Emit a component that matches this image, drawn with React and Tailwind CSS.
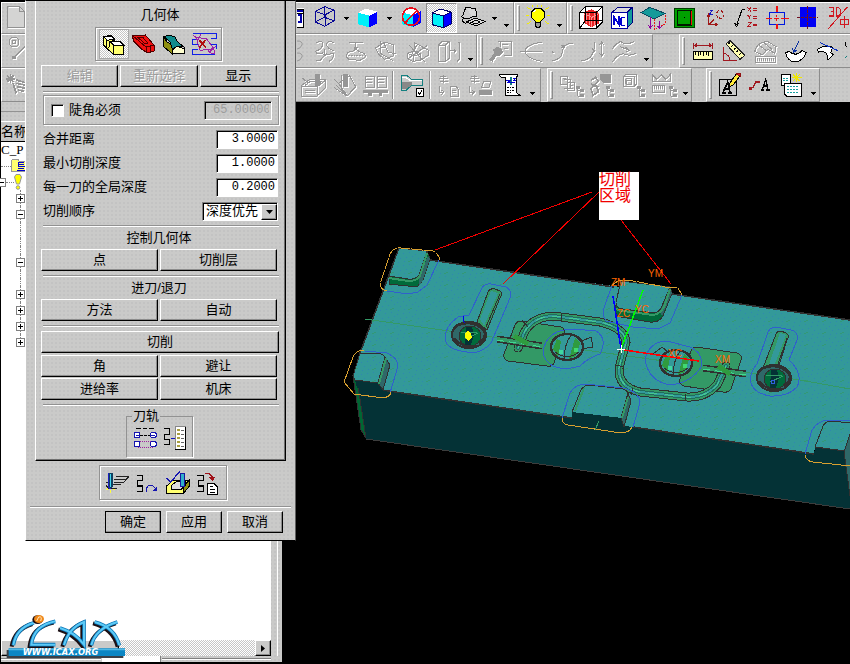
import React from "react";

const FACE = "bg-[#cacac9] bg-[radial-gradient(#c3c3c3_1px,transparent_1px)] bg-[size:4px_4px]";
const CHECKER = "bg-[repeating-conic-gradient(#ffffff_0_25%,#c6c6c6_0_50%)] bg-[size:2px_2px]";
const RAISED = "border border-t-white border-l-white border-r-black border-b-black shadow-[inset_-1px_-1px_0_#8c8c8c]";
const ETCHED = "border border-[#929292] shadow-[1px_1px_0_#fff,inset_1px_1px_0_#fff]";
const SUNKEN = "border border-t-[#808080] border-l-[#808080] border-r-white border-b-white shadow-[inset_1px_1px_0_#000]";

/* ---------- toolbar parts ---------- */

function Tool({ x, y, label, ghost, active, children }) {
  return (
    <button
      type="button"
      aria-label={label}
      disabled={ghost}
      className={`flex w-[31px] shrink-0 items-center justify-center ${active ? `h-[30px] border border-t-[#8c8c8c] border-l-[#8c8c8c] border-r-white border-b-white ${CHECKER}` : ""}`}
    >
      <svg width="30" height="30" viewBox={`${x} ${y} 90 90`} fill="none" strokeWidth="3" className="block shrink-0 overflow-visible" shapeRendering="crispEdges">
        {ghost ? (
          <>
            <g className="text-white" stroke="currentColor" transform="translate(3 3)">{children}</g>
            <g className="text-[#969696]" stroke="currentColor">{children}</g>
          </>
        ) : (
          children
        )}
      </svg>
    </button>
  );
}

function Arrow({ low }) {
  return (
    <span className={`flex w-3 shrink-0 justify-center ${low ? "items-end pb-[6px]" : "items-center"}`}>
      <svg width="5" height="3" viewBox="0 0 5 3" shapeRendering="crispEdges"><path d="M0 0H5L2.5 3Z" fill="#000" /></svg>
    </span>
  );
}

function Group({ className = "", grip, children }) {
  return (
    <div role="toolbar" className={`flex shrink-0 items-stretch border border-t-white border-l-white border-r-[#8c8c8c] border-b-[#8c8c8c] ${className}`}>
      {grip && <span className="my-[2px] mr-[2px] ml-[2px] w-[3px] shrink-0 border border-t-white border-l-white border-r-[#8c8c8c] border-b-[#8c8c8c]" />}
      {children}
    </div>
  );
}

const Divider = () => <span className="mx-[2px] my-[2px] w-[2px] shrink-0 border-l border-r border-l-[#8c8c8c] border-r-white" />;

function SolidCube() {
  return (
    <>
      <path d="M186 35L208 23L243 32L219 44Z" fill="#fff" />
      <path d="M186 35L219 44V79L186 70Z" fill="#00f0f8" />
      <path d="M219 44L243 32V67L219 79Z" fill="#00f" />
    </>
  );
}

function ToolbarOne() {
  return (
    <div className="flex h-8 overflow-hidden">
      <Group className="w-[296px] border-r-0 pr-[2px]">
        <Tool label="新建" x={-6} y={9}>
          <path d="M8 19H43L57 33V82H8Z" fill="#d4d4d3" stroke="#929292" />
          <path d="M43 19V33H57M11 22H41M60 35V85H10" stroke="#fff" />
          <path d="M43 19V33H57" stroke="#929292" />
        </Tool>
      </Group>
      <Group className="w-[217px] border-l-0">
        <span className="flex w-3 items-center">
          <svg width="7" height="20" viewBox="0 0 7 20" shapeRendering="crispEdges"><path d="M0 0H7V20H0Z" fill="#fff" /><path d="M0 1H6V19H0M0 5H6" fill="none" stroke="#000" /><path d="M0 3H6M1 7H4V14H1" stroke="#00a" strokeWidth="2" fill="none" /></svg>
        </span>
        <Tool label="线框" x={42} y={9}>
          <path d="M58 34L86 20L114 30V62L86 79L58 66ZM58 34L88 44L114 30M88 44V79M86 20V52L58 66M86 52L114 62" stroke="#0a0a96" />
        </Tool>
        <Arrow />
        <Tool label="着色" x={170} y={6}><SolidCube /></Tool>
        <Arrow />
        <Tool label="隐藏" x={299} y={9}>
          <g transform="translate(130 2)"><SolidCube /></g>
          <circle cx="344" cy="50" r="26" stroke="#e8101c" strokeWidth="5" />
          <path d="M362 31L326 69" stroke="#e8101c" strokeWidth="5" />
        </Tool>
        <Tool label="带边着色" active x={395} y={7}>
          <g transform="translate(225 2)"><SolidCube /></g>
          <path d="M411 37L433 25L468 34V69L444 81L411 72ZM411 37L444 46L468 34M444 46V81" stroke="#000066" />
        </Tool>
        <Tool label="曲面" x={487} y={9}>
          <path d="M510 22L540 26L544 48Q536 52 530 50L506 40Z" fill="#d8d8d8" stroke="#000" />
          <path d="M510 22Q504 44 498 50L506 56Q520 58 530 50" fill="#ccc" stroke="#000" />
          <path d="M512 66L538 54L568 64L542 78ZM500 56V64L510 70M526 67L540 60L554 66L540 72Z" fill="#ddd" stroke="#000" />
        </Tool>
        <Arrow />
        <Arrow low />
      </Group>
      <Group grip className="w-[53px]">
        <Tool label="灯光" x={681} y={9}>
          <path d="M694 22L704 29M690 47H700M694 72L704 65M708 16L712 22M738 16L734 22M758 22L748 29M762 47H752M758 72L748 65M724 14V20" stroke="#f4f000" />
          <path d="M720 66L706 52V36L716 26H736L746 36V52L732 66Z" fill="#ffff00" stroke="#000" />
          <path d="M719 68H733V79L729 83H723L719 79Z" fill="#999" stroke="#000" />
          <path d="M713 36L719 30" stroke="#fff" strokeWidth="4" />
        </Tool>
        <Arrow low />
      </Group>
      <Group grip className="grow">
        <Tool label="毛坯" x={14} y={7}>
          <path d="M26 34L42 18H94V64L76 82H26Z" fill="#fff" stroke="#000" />
          <path d="M38 34L62 26L84 38V68L60 80L38 66Z" fill="#e82020" />
          <path d="M38 40L62 50L84 38M62 50V78M46 36V68M54 36V74M70 36V76" stroke="#ff8c8c" />
          <path d="M26 34H76L94 18M76 34V82M42 18V60H94M26 82L42 60" stroke="#000" />
        </Tool>
        <Tool label="数控" x={108} y={7}>
          <path d="M122 36L142 19H184V66L168 82V36Z" fill="#149a9a" stroke="#000080" />
          <path d="M122 36L142 19H184L168 36Z" fill="#ddd" stroke="#000080" />
          <path d="M122 36H168V82H122Z" fill="#fff" stroke="#0000a0" />
          <path d="M128 74V48L143 70V46M162 50H152L149 55V68L153 74H162" stroke="#0000d0" strokeWidth="5" />
        </Tool>
        <Tool label="投影" x={201} y={7}>
          <path d="M210 36L236 20L282 38L250 55Z" fill="#149a9a" stroke="#0a4a60" />
          <path d="M250 56V88L282 70V40" stroke="#e81818" strokeDasharray="6 3" />
          <path d="M238 50V80M232 74L238 82L244 74M266 62V82M260 76L266 84L272 76" stroke="#9000a0" />
        </Tool>
        <Tool label="区域" x={294} y={7}>
          <path d="M311 22H369V81H311Z" fill="#00a000" stroke="#003c00" />
          <path d="M319 30H360V73H319Z" stroke="#001800" strokeWidth="4" />
          <path d="M360 30V73" stroke="#f01010" />
          <path d="M338 50H342" stroke="#000" strokeWidth="4" />
        </Tool>
        <Tool label="旋转坐标" x={388} y={7}>
          <path d="M414 44V72H438M414 72L430 56M410 48L414 40L418 48M434 68L440 72L434 76" stroke="#a01818" />
          <path d="M417 28H426L417 40H427" stroke="#1818c0" />
          <path d="M436 34L442 34M440 32L446 28M452 30L458 36M458 42V48M454 52L448 54M442 50L438 44M446 48V54H452" stroke="#a01818" />
        </Tool>
        <Tool label="坐标" x={481} y={7}>
          <path d="M524 27H514L498 74M492 66L497 78L504 68" stroke="#000" />
          <path d="M531 20L541 32M541 20L531 32M531 43L536 49L541 43M536 49V55M531 66H541L531 78H541M546 24H558M546 29H558M546 47H558M546 52H558M546 70H558M546 75H558" stroke="#b01820" />
        </Tool>
        <Tool label="对中" x={571} y={7}>
          <path d="M592 35H638V71H592Z" stroke="#0018e0" />
          <path d="M615 15V33M615 70V86" stroke="#f01010" strokeWidth="5" />
          <path d="M615 42V48M615 56V62M583 52H602M608 52H622M628 52H653" stroke="#f01010" />
        </Tool>
        <Tool label="中面" x={665} y={7}>
          <path d="M685 20H735V79H685Z" fill="#0000f4" />
          <path d="M710 16V84M678 50H740" stroke="#701020" strokeDasharray="9 3" />
        </Tool>
        <Tool label="三维" x={757} y={7}>
          <path d="M772 20H785V32H777H785V46H772M794 20V46H800L806 40V26L800 20Z" stroke="#d01820" strokeWidth="4" />
          <path d="M828 18L770 84M806 55H830V70H806ZM818 46V82" stroke="#d01820" />
        </Tool>
      </Group>
    </div>
  );
}

function ToolbarTwo() {
  return (
    <div className="flex h-[34px] overflow-hidden">
      <Group className="w-[296px] border-r-0 pr-[2px]">
        <Tool label="草图" ghost x={-6} y={120}>
          <circle cx="27" cy="138" r="15" /><circle cx="27" cy="138" r="6" />
          <path d="M27 184L72 140" /><path d="M22 180H30V188H22ZM64 138H72V146H64Z" fill="currentColor" />
        </Tool>
      </Group>
      <Group className="w-[180px] border-l-0">
        <span className="flex w-3 items-center">
          <svg width="7" height="22" viewBox="0 0 7 22" fill="none" stroke="#999"><path d="M0 1Q6 1 5 5Q3 9 0 9M0 13Q6 13 5 17Q3 21 0 21" /></svg>
        </span>
        <Tool label="曲线" ghost x={41} y={108}><path d="M60 128Q78 118 80 132Q76 148 58 154Q60 166 80 158M112 128Q94 118 90 134Q96 148 112 152M60 182Q72 186 78 172Q90 160 112 162Q114 174 98 184M84 148V166M79 160L84 167L90 160" /></Tool>
        <Tool label="投影曲线" ghost x={134} y={108}><path d="M158 126H200M178 126V146M172 140L178 148L184 140M150 170Q152 152 168 154L178 148L192 156Q210 160 206 172Q196 176 190 182L170 178Q160 184 150 170Z" /><path d="M156 166H200" strokeDasharray="5 3" /></Tool>
        <Tool label="相交曲线" ghost x={227} y={108}><path d="M238 144L264 126L292 134L290 168L264 178L246 162ZM252 122V160L290 182M262 128L276 158L300 160M248 146L270 140" /></Tool>
        <Tool label="截面曲线" ghost x={321} y={108}><path d="M334 160L356 152L374 162V180L350 184L334 176ZM356 152V128L396 150V166L374 180M338 134L386 186M362 136L344 170M394 136L336 176M334 160L352 168L374 162M352 168V184" /></Tool>
        <Tool label="偏置" ghost x={413} y={108}><path d="M426 136L438 124H458V176L448 184H426ZM426 136H446L458 124M446 136V184M462 152H478M472 146L478 152L472 158M484 128H490V176L482 184" /></Tool>
        <Arrow low />
      </Group>
      <Group grip className="w-[176px]">
        <Tool label="编辑曲线" ghost x={573} y={108}><path d="M608 124H648V166H626M616 124V140M622 134H640M626 144H640" /><path d="M584 178L600 160L596 150L606 142L618 146L622 156L614 166L604 166L592 184Z" fill="currentColor" /></Tool>
        <Tool label="修剪" ghost x={666} y={108}><path d="M676 154H742M742 126Q690 134 690 154Q696 178 742 184" /></Tool>
        <Tool label="分割" ghost x={759} y={108}><path d="M770 182Q800 180 802 154Q804 130 834 130M800 136L808 144M808 136L800 144M770 152L776 160" /></Tool>
        <Tool label="圆角" ghost x={28} y={108}><path d="M34 182Q74 182 76 126M96 130V164M88 136L96 126L104 136M88 158L96 168L104 158M68 146L76 154M60 170L70 178" /></Tool>
        <Tool label="光顺" ghost x={121} y={108}><path d="M128 146Q150 118 158 128Q168 138 194 124M128 186Q148 158 164 162Q180 170 198 160M152 140L176 150M168 142L178 152L168 156" /></Tool>
        <Arrow low />
      </Group>
      <div className="w-[26px] shrink-0" />
      <Group grip className="grow border-t-white">
        <Tool label="测距" x={352} y={108}>
          <path d="M368 128V146M426 128V146M372 136H422M380 130L372 136L380 142M414 130L422 136L414 142" stroke="#a01820" />
          <path d="M367 155H426V177H367Z" fill="#ffffb0" stroke="#000" />
          <path d="M374 156V164M382 156V168M390 156V164M398 156V168M406 156V164M414 156V168" stroke="#000" />
        </Tool>
        <Tool label="测角" x={445} y={108}>
          <path d="M458 140V182H498M458 160Q476 162 478 182" stroke="#a01820" />
          <path d="M466 132L478 122L522 166L508 178Z" fill="#ffffb0" stroke="#222" />
          <path d="M478 128L474 132M486 136L482 140M494 144L490 148M502 152L498 156M510 160L506 164" stroke="#000" />
        </Tool>
        <Tool label="测面" ghost x={538} y={108}><path d="M552 154Q560 126 590 124L616 140L612 160L592 148L574 164ZM566 136L590 154M580 128L604 148M554 170H614V186H554Z" /><path d="M558 178H612" strokeDasharray="3 3" strokeWidth="9" /></Tool>
        <Tool label="曲率" x={631} y={108}>
          <path d="M645 158L656 154Q674 172 694 152L706 158Q698 184 672 186Q650 184 645 158Z" fill="#fff" stroke="#000" />
          <path d="M686 122L668 156M666 144L668 158L678 150" stroke="#0a30a0" />
        </Tool>
        <Tool label="切线" x={724} y={108}>
          <path d="M740 148Q764 132 786 142L780 158L788 164L772 180L768 160Q758 152 744 156Z" fill="#fff" stroke="#000" />
          <path d="M748 128L802 152" stroke="#0a30c0" />
        </Tool>
        <span className="flex w-2 shrink-0 items-center">
          <svg width="5" height="20" viewBox="0 0 5 20" fill="none" shapeRendering="crispEdges"><path d="M3 1V4L5 6" stroke="#000" /><path d="M3 17L5 15" stroke="#148080" /></svg>
        </span>
      </Group>
    </div>
  );
}

const SmallTree = ({ dx }) => (
  <g transform={`translate(${dx} 0)`}><path d="M0 262V288M0 272H8M0 288H8" /><path d="M-4 260H4V266H-4ZM8 268H16V274H8ZM8 284H16V290H8Z" fill="currentColor" /></g>
);

function ToolbarThree() {
  return (
    <div className="flex h-[34px] overflow-hidden">
      <Group className="w-[296px] border-r-0 pr-[2px]">
        <Tool label="加工" ghost x={-6} y={210}>
          <path d="M16 222V250M2 236H30M6 226L26 246M26 226L6 246M24 250L34 280M34 240L72 252M34 250L72 258M36 260L68 266M38 270L56 274" strokeWidth="5" />
        </Tool>
      </Group>
      <Group className="w-[244px] border-l-0">
        <Tool label="型腔铣" ghost x={9} y={210}><path d="M20 256L44 238H90V264L66 288H20ZM20 260H66L90 242M30 256L46 244H80L62 260M66 260V288M22 234L40 250M30 270H60M30 278H60" /><path d="M62 222H72V256H62Z" fill="currentColor" /></Tool>
        <Tool label="曲面铣" ghost x={102} y={210}><path d="M116 236L130 250L164 228L182 260L156 288L116 262M130 250L156 286M140 226V262M124 256L150 280" /><path d="M146 222H156V258H146Z" fill="currentColor" /></Tool>
        <Tool label="刀路" ghost x={195} y={210}><path d="M210 228H238V262H210ZM246 228H274V262H246ZM214 238H232M214 246H232M250 238H268M250 246H268" /><path d="M206 270H276V276H206ZM220 276H228V286H220ZM252 276H260V286H252Z" fill="currentColor" /></Tool>
        <Divider />
        <Tool label="刀具" x={306} y={210}>
          <path d="M318 225H334L350 238H382V256H350L334 270H318Z" fill="#ccc" stroke="#148080" />
          <path d="M322 246H350V254L336 266H322Z" fill="#888" />
          <path d="M322 232H332L346 242H380" stroke="#fff" />
          <path d="M364 266H386V289H364Z" fill="#fff" stroke="#000" /><path d="M369 277L374 282L381 272" stroke="#000" />
        </Tool>
        <Divider />
        <Tool label="生成" ghost x={417} y={210}><path d="M446 224V248M432 236H458M436 230H452M436 244H458M432 258V276H444M438 270L448 276L438 284M466 258H482L490 268V288H466ZM470 270H484M470 278H484" /></Tool>
        <Tool label="后处理" ghost x={510} y={210}><path d="M538 224V248M524 236H552M528 230H546M528 244H552M524 258V276H536M530 270L540 276L530 284M560 262L566 244H588L582 262Z" /><path d="M552 270H588V284H552Z" fill="currentColor" /></Tool>
        <Tool label="文档" x={603} y={210}>
          <path d="M614 224H668V230H664V278L676 286H630V232H620L614 228Z" fill="#fff" stroke="#000" />
          <path d="M636 262H656M636 270H658M636 278H650" stroke="#000" strokeDasharray="5 3" />
          <path d="M648 230V254" stroke="#148080" strokeWidth="6" />
          <path d="M634 240H646L638 248H660M654 234H662L656 242H662" stroke="#0000d0" />
        </Tool>
        <Arrow low />
      </Group>
      <div className="w-[6px] shrink-0" />
      <Group grip className="w-[145px]">
        <Tool label="程序树" ghost x={-43} y={210}><path d="M-28 228H-8V252H-28ZM-18 238H2V264H-18M-8 248H12V272H-8ZM-22 236H-12M-2 256H8M-2 264H8" /><SmallTree dx={22} /></Tool>
        <Tool label="刀具树" ghost x={50} y={210}><path d="M62 240L76 232L84 244L62 266L68 286L84 276L78 254M62 252L84 262" strokeWidth="5" /><path d="M92 222H120V248H100L92 240Z" fill="currentColor" /><SmallTree dx={112} /></Tool>
        <Tool label="几何树" ghost x={142} y={210}><path d="M158 230L166 222H198V252L190 260H158ZM158 230H190V260M166 240H182V252H166Z" /><circle cx="174" cy="244" r="10" /><SmallTree dx={206} /></Tool>
        <Tool label="方法树" ghost x={235} y={210}><path d="M244 224V244H298V224L286 238L272 224L258 238ZM246 256H282V276H246Z" /><path d="M250 262H282" strokeDasharray="3 3" strokeWidth="8" /><SmallTree dx={300} /></Tool>
        <Arrow low />
      </Group>
      <div className="w-[14px] shrink-0" />
      <Group grip className="w-[114px]">
        <Tool label="注释" x={436} y={210}>
          <path d="M449 238H499V286H449Z" stroke="#000" />
          <path d="M456 278H468M474 278H486M461 276L474 246L481 276M464 266H478" stroke="#000" strokeWidth="5" />
          <path d="M480 250L500 222L512 226L490 256L480 260Z" fill="#ffe838" stroke="#000" />
          <path d="M500 222L512 220V228Z" fill="#e02020" stroke="#901010" />
        </Tool>
        <Tool label="标注" x={529} y={210}>
          <path d="M538 268L550 262L558 246H572" stroke="#a01820" strokeWidth="4" /><path d="M537 262H547V270H537Z" fill="#a01820" />
          <path d="M573 270H583M589 270H600M578 268L588 238L595 268M580 258H594" stroke="#000" strokeWidth="4" />
        </Tool>
        <Tool label="表格" x={622} y={210}>
          <path d="M634 224H662V256H634Z" fill="#fff" stroke="#000" /><path d="M644 250H694V288H650L644 282Z" fill="#fff" stroke="#000" />
          <path d="M640 234H656M640 242H656M652 260H686M652 268H686M652 276H686" stroke="#18a0a0" strokeDasharray="6 3" />
          <path d="M680 220V246M666 233H696M670 223L690 243M690 223L670 243" stroke="#f0e800" />
        </Tool>
        <Arrow low />
      </Group>
    </div>
  );
}

/* ---------- navigator ---------- */

function Expander({ open }) {
  return (
    <button type="button" aria-label={open ? "折叠" : "展开"} className="relative flex size-[9px] shrink-0 items-center justify-center border border-[#808080] bg-white">
      <span className="h-px w-[5px] bg-black" />
      {!open && <span className="absolute h-[5px] w-px bg-black" />}
    </button>
  );
}

const TREE_ROWS = ["closed", "open", "", "", "open", "", "closed", "closed", "closed", "closed"];

function Navigator() {
  return (
    <aside className={`relative flex w-[282px] shrink-0 flex-col border-l border-black ${FACE}`}>
      <div className="flex min-h-0 grow">
        <div className="flex w-[270px] flex-col">
          <div className="mt-[9px] h-[11px] border-t border-b border-t-[#929292] border-b-white" />
          <div className="h-5 overflow-hidden border-b border-black text-[13px] leading-5">名称</div>
          <div className="flex min-h-0 grow flex-col bg-white">
            <div className="h-4 w-6 overflow-hidden font-['Liberation_Serif',serif] text-[13px] leading-4">C_P</div>
            <div className="flex h-4 items-center">
              <span className="w-[10px] border-t border-dotted border-[#808080]" />
              <svg width="16" height="14" viewBox="0 0 16 14" shapeRendering="crispEdges"><path d="M0 2L2 0H7L8 2H16V12H0Z" fill="#ffff70" stroke="#999" /><path d="M13 3H7V7H14V11H6M7 5H13M7 9H13" stroke="#0000d0" fill="none" /></svg>
            </div>
            <div className="flex h-4 items-center">
              <span className="-ml-1"><Expander open /></span>
              <span className="w-2 border-t border-dotted border-[#808080]" />
              <svg width="8" height="16" viewBox="0 0 8 16"><path d="M2 0.5H6L7.500 3L5.500 10H2.500L0.500 3Z" fill="#ffff00" stroke="#999" /><circle cx="4" cy="13.500" r="1.800" fill="#ffff00" stroke="#999" /></svg>
            </div>
            <div className="flex flex-col">
              {TREE_ROWS.map((state, i) => (
                <div key={i} className="ml-[15px] flex h-4 w-[9px] flex-col items-center">
                  <span className="w-px grow border-l border-dotted border-[#808080]" />
                  {state && <Expander open={state === "open"} />}
                  <span className={`w-px grow ${i < 9 ? "border-l border-dotted border-[#808080]" : ""}`} />
                </div>
              ))}
            </div>
          </div>
          <div className={`flex h-4 shrink-0 justify-between ${CHECKER}`}>
            <span className={`h-4 w-[118px] bg-[#cacac9] ${RAISED}`} />
            <button type="button" aria-label="向右滚动" className={`flex h-4 w-4 items-center justify-center bg-[#cacac9] ${RAISED}`}>
              <svg width="4" height="7" viewBox="0 0 4 7"><path d="M0 0L4 3.500L0 7Z" fill="#000" /></svg>
            </button>
          </div>
        </div>
        <div className="ml-auto w-[5px] border-l border-white" />
      </div>
      <div className="flex h-2 w-full shrink-0 items-start gap-px border-b-2 border-black pr-[11px]">
        <span className="mt-[2px] h-[2px] w-[100px] border-t border-b border-t-[#808080] border-b-white" />
        <span className="h-[6px] w-[59px] border-r border-[#808080] bg-white" />
        <span className="mt-[2px] h-[2px] grow border-t border-b border-t-[#808080] border-b-white" />
      </div>
      <Logo />
    </aside>
  );
}

function Logo() {
  const strokes = "M40 316Q48 264 102 248M166 244Q100 258 94 314H166M180 264Q226 278 252 314V246Q206 264 192 316M284 246Q344 262 358 316M274 316Q286 266 352 246";
  return (
    <svg className="absolute bottom-1 left-1" width="123" height="48" viewBox="15 216 369 144" fill="none">
      <path d={strokes} transform="translate(-5 4)" stroke="#1c1014" strokeWidth="12" />
      <path d={strokes} stroke="#0b77b8" strokeWidth="11" />
      <path d={strokes} stroke="#5ccaf6" strokeWidth="6" />
      <path d="M20 330H370V354H20Z" fill="#3a4048" />
      <path d="M26 325H375V348H26Z" fill="#0b86c4" />
      <path d="M26 326H375V331H26Z" fill="#50b8e4" />
      <ellipse cx="113" cy="239" rx="16" ry="13" fill="#201010" />
      <ellipse cx="117" cy="237" rx="15" ry="12" fill="#f08818" />
      <path d="M110 243L116 231Q128 228 122 243" stroke="#ffe8c0" strokeWidth="3" />
      <text x="68" y="346" fill="#fff" fontFamily="'DejaVu Sans', sans-serif" fontWeight="bold" fontStyle="italic" fontSize="25">WWW.ICAX.ORG</text>
    </svg>
  );
}

/* ---------- model view ---------- */

function Bore({ cx, cy }) {
  return (
    <g transform={`translate(${cx} ${cy})`}>
      <ellipse rx="17" ry="13" fill="#2f6868" stroke="#303030" strokeWidth="2" />
      <ellipse cx="1" cy="1" rx="11" ry="10" fill="#006a3a" stroke="#303030" />
      <path d="M-3 -8H3L5 0L2 10H-4Z" fill="#043236" />
      <path d="M-15 3Q-8 13 8 11M-10 -10Q4 -15 14 -5M10 8Q16 4 16 -3M-17 -3Q-14 -12 -4 -12M12 -9L17 1" stroke="#303030" strokeWidth="2" fill="none" />
      <path d="M-8 -3H8M-4 4L9 -2" stroke="#339966" />
    </g>
  );
}

function Dome({ cx, cy }) {
  return (
    <g transform={`translate(${cx} ${cy})`}>
      <ellipse rx="16" ry="13" fill="#339999" stroke="#303030" strokeWidth="2.500" />
      <path d="M-14 2L-10 -8L-6 -6L-9 10ZM8 -9L13 -4L9 9L2 12Z" fill="#2f9b3f" />
      <path d="M-2 12Q-4 0 4 -12M-12 5Q0 14 12 5" stroke="#303030" fill="none" />
      <circle cx="-6" cy="5" r="2.500" fill="#40d8a0" /><circle cx="9" cy="3" r="2.500" fill="#40d870" />
    </g>
  );
}

function Pipe({ d }) {
  return (
    <g fill="none" strokeLinecap="round">
      <path d={d} stroke="#303030" strokeWidth="9" />
      <path d={d} stroke="#339966" strokeWidth="7" />
      <path d={d} stroke="#1f6e5c" strokeWidth="4" />
      <path d={d} stroke="#339999" strokeWidth="2" />
      <path d={d} stroke="#45c890" strokeWidth="1" strokeDasharray="9 8" />
    </g>
  );
}

function Model() {
  return (
    <svg className="absolute inset-0 size-full" viewBox="282 102 568 562" preserveAspectRatio="xMinYMin slice" shapeRendering="crispEdges" fill="none">
      <defs>
        <pattern id="grain" width="18" height="12" patternUnits="userSpaceOnUse">
          <path d="M0 0H18V12H0Z" fill="#339999" />
          <path d="M1 2H2M7 1H8M13 0H14M4 6H5M10 5H11M16 4H17M2 10H3M8 9H9" stroke="#3088b0" />
          <path d="M12 10L16 8" stroke="#339966" strokeWidth="0.700" />
        </pattern>
      </defs>
      <path d="M353 376L382 390L572 418L633 427L814 454L850 440V509L366 439L361 430Z" fill="#043236" />
      <path d="M366 439L850 509" stroke="#3c3c3c" />
      <path d="M353 376L357 380L366 438L361 430Z" fill="#006633" stroke="#303030" />
      <path d="M399 248L427 251L430 260L621 287L672 294L850 320V459L815 447L814 454L633 427L624 426L572 418L382 390L354 376L360 353Z" fill="url(#grain)" />
      <path d="M360 353L399 248M430 260L614 287M672 294L850 320M382 390L572 418M633 427L814 454" stroke="#303030" strokeWidth="1.500" />
      <path d="M365 319L470 334L800 380L850 389M530 338L560 345" stroke="#339966" />

      {/* raised pads */}
      <path d="M389 276L389 284L417 287L423 280L430 259L427 251L419 275L408 279Z" fill="#006a3a" stroke="#303030" />
      <path d="M423 280L430 259L428 256L419 277V286Z" fill="#2f6868" />
      <path d="M399 248L427 251L419 275Q415 280 408 279L389 276Z" fill="url(#grain)" stroke="#303030" />
      <path d="M389 278L408 281Q417 281 420 276L427 253" stroke="#339966" strokeWidth="2" />
      <path d="M615 305L615 311Q616 316 621 317L650 322Q659 323 663 316L672 293L670 287L660 308Z" fill="#006a3a" stroke="#303030" />
      <path d="M662 316L672 293L670 289L660 310Z" fill="#2f6868" />
      <path d="M621 281L670 287L662 306Q659 313 653 313L623 309Q615 308 616 302Z" fill="url(#grain)" stroke="#303030" />
      <path d="M616 308Q618 311 623 311L653 315Q660 314 664 307L670 289" stroke="#339966" strokeWidth="2" />
      <path d="M355 380L378 383L383 391L357 388Z" fill="#043236" />
      <path d="M360 353L381 354Q386 356 385 360L378 383L355 380L353 376Z" fill="url(#grain)" stroke="#303030" />
      <path d="M385 357L390 365L383 390L378 383Z" fill="#2f6868" stroke="#303030" /><path d="M386 358L379 384" stroke="#339966" strokeWidth="2" />
      <path d="M572 412L622 418L625 427L572 420Z" fill="#043236" />
      <path d="M572 419V412L581 390Q584 385 590 385L623 389Q629 391 628 397L621 419" fill="url(#grain)" stroke="#303030" />
      <path d="M572 412L622 418L624 427L572 419Z" fill="#043236" />
      <path d="M628 393L631 401L624 427L621 418Z" fill="#2f6868" stroke="#303030" /><path d="M628 397L622 418M584 388L575 411" stroke="#339966" strokeWidth="2" />
      <path d="M815 447L850 452V462L814 455Z" fill="#043236" />
      <path d="M815 447L823 426Q826 421 831 421L850 423V436L845 451Z" fill="url(#grain)" stroke="#303030" />
      <path d="M850 434L844 452L850 496Z" fill="#2f6868" stroke="#303030" />

      {/* green recesses and runners */}
      <path d="M521 321L561 327Q566 329 564 335L554 363Q552 367 547 366L508 361Q503 359 504 354L515 325Q517 321 521 321Z" fill="#339966" stroke="#303030" />
      <path d="M696 347L737 353Q743 355 741 360L731 389Q728 393 723 392L684 386Q678 384 680 379L691 351Q693 347 696 347Z" fill="#339966" stroke="#303030" />
      <Pipe d="M518 348L524 333Q532 317 553 316L600 322Q625 328 626 342L619 368Q618 387 640 392L687 397Q705 398 717 385L726 366" />
      <path d="M497 339L542 346M703 368L746 374" stroke="#303030" strokeWidth="7" />
      <path d="M497 339L542 346M703 368L746 374" stroke="#339966" strokeWidth="4" />
      <path d="M497 340L542 347M703 369L746 375" stroke="#40d890" strokeDasharray="7 5" />
      <path d="M514 336L528 344M718 366L730 374" stroke="#2f9b3f" strokeWidth="5" />
      <path d="M522 320L528 327M561 314V321M633 388L631 395M685 394V401M616 365L624 367" stroke="#303030" />
      <path d="M580 342L591 337L593 347L582 349M653 354L662 347L668 352L660 358" fill="#339999" stroke="#303030" />
      <Dome cx={567} cy={347} />
      <Dome cx={676} cy={363} />

      {/* slots and bores */}
      <path d="M488 292Q490 288 495 289L500 291Q503 293 500 298L487 330L477 322Z" fill="#339966" stroke="#303030" />
      <path d="M491 291L498 293L484 326L480 319Z" fill="#339999" /><path d="M500 294L486 327" stroke="#303030" />
      <path d="M776 334Q777 331 781 331L786 333Q790 335 787 340L777 372L763 368Z" fill="#339966" stroke="#303030" />
      <path d="M780 333L786 335L773 369L768 367Z" fill="#339999" /><path d="M787 338L776 370" stroke="#303030" />
      <Bore cx={469} cy={335} />
      <Bore cx={774} cy={378} />
      <path d="M465 333L468 331L471 334L472 338L468 341L465 338Z" fill="#ffff00" />
      <path d="M463 315V321L465 323" stroke="#0000f0" /><circle cx="773" cy="382" r="2" stroke="#3060e0" />

      {/* cut region boundaries */}
      <g stroke="#3060cc">
        <path d="M439 260L427 285L418 292L408 294L387 291M482 288Q485 283 491 284L506 287Q512 290 510 298L491 343Q480 355 467 352Q446 350 445 338Q445 326 458 317L469 315Z" />
        <path d="M682 295L670 323L658 329L633 327L606 321Q602 316 604 308L612 285M365 351L387 353Q398 358 398 366L390 393M562 418L570 393Q575 384 586 384L623 388Q640 392 640 403L633 427M805 454L812 430Q818 420 830 420L850 421" />
        <path d="M767 335Q769 327 776 327L791 330Q799 332 797 340L789 360Q804 374 797 387Q788 397 770 396Q752 393 750 380Q751 371 757 364ZM543 351Q547 329 574 329L596 331Q608 338 600 354Q588 358 580 366Q564 371 553 366Q543 360 543 351ZM645 359Q650 341 667 341L690 347Q704 353 701 367Q691 383 670 385Q648 381 645 359Z" />
      </g>
      <g stroke="#d8a030">
        <path d="M387 291Q379 290 381 281L390 254Q394 247 401 248L433 251Q439 254 440 260M665 287L678 288L682 295M612 285L618 281L628 280L665 287" strokeDasharray="12 1" />
        <path d="M364 350Q356 350 353 357L344 382L354 394L383 398Q390 397 391 392M562 418Q562 424 568 425L621 433Q629 433 632 427M805 455Q806 461 813 462L850 466" />
      </g>
      <path d="M595 430L599 421" stroke="#339966" />

      {/* leaders and coordinate axes */}
      <path d="M592 192L435 250M599 192L503 284M621 220L671 284" stroke="#f40000" />
      <path d="M613 296L621 349" stroke="#0000ff" strokeWidth="1.500" /><path d="M643 290L621 349" stroke="#00ff00" strokeWidth="1.500" /><path d="M624 350L699 361" stroke="#ff0000" strokeWidth="1.500" />
      <path d="M617 349H625M621 345V353" stroke="#fff" />
      <g fill="#ff6600" fontFamily="'Liberation Sans', sans-serif" fontSize="10">
        <text x="611" y="286">ZM</text><text x="648" y="277">YM</text><text x="617" y="317">ZC</text>
        <text x="635" y="313">YC</text><text x="668" y="357">XC</text><text x="715" y="363">XM</text>
      </g>
    </svg>
  );
}

/* ---------- dialog ---------- */

const Rule = ({ className = "mt-1 ml-[2px]" }) => <hr className={`h-[2px] border-0 border-t border-b border-t-[#929292] border-b-white ${className}`} />;

function Btn({ children, disabled, primary }) {
  return (
    <button
      type="button"
      disabled={disabled}
      className={`h-[22px] leading-[18px] ${RAISED} ${primary ? "outline outline-1 -outline-offset-1 outline-black" : ""} ${disabled ? "text-[#9c9c9c] [text-shadow:1px_1px_0_#fff]" : ""}`}
    >
      {children}
    </button>
  );
}

function IconBtn({ label, view, active, children }) {
  return (
    <button type="button" aria-label={label} className={`flex h-7 items-center justify-center ${active ? CHECKER + " outline outline-1 outline-[#a8a8a8]" : ""}`}>
      <svg width="28" height="26" viewBox={view} fill="none" strokeWidth="3" shapeRendering="crispEdges" className="block overflow-visible">{children}</svg>
    </button>
  );
}

function Field({ id, label, value }) {
  return (
    <div className="flex h-6 items-center justify-between pl-[2px]">
      <label htmlFor={id}>{label}</label>
      <input id={id} defaultValue={value} className={`h-[19px] w-[62px] bg-white pr-[2px] text-right font-['Liberation_Mono',monospace] text-[12px] outline-none ${SUNKEN}`} />
    </div>
  );
}

function Dialog() {
  return (
    <section role="dialog" aria-label="几何体" className={`absolute top-0 left-[25px] w-[271px] border border-t-black border-l-white border-r-[#606060] border-b-black pb-[7px] text-[13px] ${FACE}`}>
      <div className="mx-[9px] border border-t-0 border-l-white border-r-black border-b-black pr-[6px] pb-[2px] pl-[5px] shadow-[inset_-1px_-1px_0_#707070]">
        <h1 className="pt-[2px] text-center leading-6">几何体</h1>
        <div className={`ml-[54px] flex h-[34px] w-[127px] items-center justify-center gap-[2px] ${ETCHED}`}>
          <IconBtn active label="部件" view="300 92 84 78">
            <path d="M310 108L334 106L344 114L344 122L360 124L370 134V162H340L310 134Z" fill="#ffff70" stroke="#000" />
            <path d="M310 108H332L344 116L322 120ZM330 124H358L370 134H340Z" fill="#fff" stroke="#000" />
            <path d="M340 134V162M310 108L320 118V142M344 116L326 132M330 124L326 144" stroke="#000" />
          </IconBtn>
          <IconBtn label="毛坯" view="392 98 84 78">
            <path d="M400 112L438 110L464 140V158L444 164L424 150L402 128Z" fill="#f01010" stroke="#500000" />
            <path d="M400 112L440 146V162M440 146L464 140M452 144V162M416 118L430 117L446 134L438 137Z" stroke="#500000" />
          </IconBtn>
          <IconBtn label="切削区域" view="480 92 84 78">
            <path d="M490 108V138L516 160V132L500 124Z" fill="#909010" stroke="#000" />
            <path d="M490 108L506 106L524 108L532 124L552 140L532 138L518 148L510 124Z" fill="#108c8c" stroke="#000" />
            <path d="M518 148L530 138L554 146V160H518Z" fill="#ffffd0" stroke="#000" />
          </IconBtn>
          <IconBtn label="修剪边界" view="570 92 84 78">
            <path d="M578 100H648V114H632M648 132V146M634 162H578V148H594M596 132H578V116H598M632 132H648M644 162H634" stroke="#1020e8" />
            <path d="M588 110L620 116L642 146L600 150ZM580 106L594 118M602 102L594 118M630 158L622 146M648 138L632 146" stroke="#a020a8" />
            <circle cx="638" cy="154" r="6" stroke="#a020a8" />
            <path d="M598 120L618 142M616 120L598 142" stroke="#b01010" strokeWidth="5" />
          </IconBtn>
        </div>
        <div className="mt-1 grid grid-cols-3 gap-[2px] pr-[2px]">
          <Btn disabled>编辑</Btn>
          <Btn disabled>重新选择</Btn>
          <Btn>显示</Btn>
        </div>
        <Rule />
        <div className={`mt-[2px] ml-[2px] flex h-[30px] items-center justify-between pr-[6px] pl-[7px] ${ETCHED}`}>
          <label className="flex items-center gap-[5px]">
            <input type="checkbox" className={`size-[13px] appearance-none bg-white ${SUNKEN}`} />
            陡角必须
          </label>
          <input aria-label="陡角" disabled defaultValue="65.00000" className={`h-[19px] w-[68px] bg-transparent pr-[2px] pl-2 font-['Liberation_Mono',monospace] text-[12px] text-[#9c9c9c] ${SUNKEN}`} />
        </div>
        <div className="mt-[2px] pr-px">
          <Field id="merge" label="合并距离" value="3.0000" />
          <Field id="mindepth" label="最小切削深度" value="1.0000" />
          <Field id="globaldepth" label="每一刀的全局深度" value="0.2000" />
          <div className="flex h-6 items-center justify-between pl-[2px]">
            <label htmlFor="order">切削顺序</label>
            <div className="relative h-[19px] w-[76px]">
              <select id="order" className={`block size-full appearance-none bg-white pl-[3px] text-[13px] leading-4 outline-none ${SUNKEN}`}>
                <option>深度优先</option>
                <option>层优先</option>
              </select>
              <span className={`pointer-events-none absolute top-[2px] right-px flex h-4 w-4 items-center justify-center bg-[#cacac9] ${RAISED}`}>
                <svg width="7" height="4" viewBox="0 0 7 4"><path d="M0 0H7L3.500 4Z" fill="#000" /></svg>
              </span>
            </div>
          </div>
        </div>
        <Rule className="mt-[2px] ml-[2px]" />
        <h2 className="pr-[2px] text-center leading-[22px]">控制几何体</h2>
        <div className="grid grid-cols-2 gap-[2px] pr-[2px]">
          <Btn>点</Btn>
          <Btn>切削层</Btn>
        </div>
        <Rule />
        <h2 className="pr-[2px] text-center leading-[22px]">进刀/退刀</h2>
        <div className="grid grid-cols-2 gap-[2px] pr-[2px]">
          <Btn>方法</Btn>
          <Btn>自动</Btn>
        </div>
        <Rule />
        <div className="mt-1 grid"><Btn>切削</Btn></div>
        <div className="mt-[2px] grid grid-cols-2 gap-x-[2px] gap-y-px pr-[2px]">
          <Btn>角</Btn>
          <Btn>避让</Btn>
          <Btn>进给率</Btn>
          <Btn>机床</Btn>
        </div>
        <Rule />
        <fieldset className="mx-auto mt-[2px] h-[50px] w-[68px] border border-t-[#929292] border-l-[#929292] border-r-white border-b-white shadow-[inset_-1px_0_0_#929292]">
          <legend className="ml-[5px] px-px leading-4">刀轨</legend>
          <div className="flex justify-center gap-[2px]">
            <IconBtn label="显示选项" view="388 76 84 78">
              <path d="M404 88H458" stroke="#000" strokeDasharray="14 5" /><path d="M416 106H446" stroke="#000" strokeDasharray="8 3" />
              <path d="M410 124H456M410 142H456" stroke="#a020a0" strokeDasharray="3 3" />
              <g fill="#fff" stroke="#1414b0"><circle cx="406" cy="106" r="9" /><circle cx="455" cy="106" r="9" /><circle cx="406" cy="133" r="9" /><circle cx="455" cy="133" r="9" /></g>
              <path d="M402 106H416M446 106H459" stroke="#1414b0" />
            </IconBtn>
            <IconBtn label="列表" view="480 76 84 78">
              <path d="M488 88H505V103H490V119H505V135H488" stroke="#000" /><path d="M510 116H522" stroke="#1414c0" />
              <path d="M523 82H554V149H523Z" fill="#fff" stroke="#888" /><path d="M554 82V149H523" stroke="#000" />
              <path d="M532 88V146" stroke="#aaa040" strokeWidth="7" strokeDasharray="7 5" /><path d="M540 92H549M540 104H549M540 116H549M540 128H549M540 140H549" stroke="#666" />
            </IconBtn>
          </div>
        </fieldset>
      </div>
      <div className={`mt-1 ml-[73px] flex h-[35px] w-[128px] items-center justify-center gap-[2px] ${ETCHED}`}>
        <IconBtn label="生成" view="316 204 84 78">
          <path d="M352 224H390L376 240H346M346 232H382M322 240H330M342 248H366M322 250L330 258H356" stroke="#222" />
          <path d="M328 213H343V254L335 262L328 254Z" fill="#104060" /><path d="M334 216V256" stroke="#40d8f0" /><path d="M328 213V254L335 261" stroke="#2020c0" />
          <path d="M334 264V272M322 264L328 260M348 264L342 260" stroke="#ffff40" />
        </IconBtn>
        <IconBtn label="重播" view="406 204 84 78">
          <path d="M414 221H431V236H416V252H431V268H414" stroke="#000" strokeWidth="4" />
          <path d="M442 270V260L450 250H462L472 262" stroke="#1414b0" /><path d="M476 252V268H460Z" fill="#1414b0" />
        </IconBtn>
        <IconBtn label="确认" view="492 204 84 78">
          <path d="M500 252L520 234H568V252L550 275H500Z" fill="#ffff70" stroke="#000" />
          <path d="M550 252L568 234V252L550 275Z" fill="#909010" stroke="#000" /><path d="M514 262V250L530 238H556V250L544 262Z" fill="#ddd" stroke="#000" />
          <path d="M541 214V252H554V214Z" fill="#30b0c8" stroke="#1818a0" />
          <path d="M500 228L512 240L540 208" stroke="#1414b0" strokeWidth="4" />
        </IconBtn>
        <IconBtn label="列表输出" view="584 204 84 78">
          <path d="M594 221H612V236H597V252H612V268H594" stroke="#000" strokeWidth="4" />
          <path d="M616 214H630L640 226" stroke="#a01018" strokeWidth="4" /><path d="M630 226H648L640 237Z" fill="#a01018" />
          <path d="M625 245H644L653 254V278H625Z" fill="#fff" stroke="#000" /><path d="M631 254H640M631 262H648M631 270H648" stroke="#000" />
        </IconBtn>
      </div>
      <Rule className="mt-[6px] mr-1 ml-1" />
      <div className="mt-[3px] mr-3 ml-auto grid w-[178px] grid-cols-3 gap-[5px]">
        <Btn primary>确定</Btn>
        <Btn>应用</Btn>
        <Btn>取消</Btn>
      </div>
    </section>
  );
}

export default function App() {
  return (
    <div className="relative flex h-screen min-h-[600px] flex-col overflow-hidden bg-black font-['Liberation_Sans','Noto_Sans_CJK_SC',sans-serif] text-black">
      <header className={`mt-[2px] shrink-0 border-l border-black ${FACE}`}>
        <ToolbarOne />
        <ToolbarTwo />
        <ToolbarThree />
      </header>
      <main className="flex min-h-0 grow">
        <Navigator />
        <div className="relative grow overflow-hidden bg-black">
          <Model />
          <p className="absolute top-[70px] left-[317px] h-12 w-10 bg-white text-[16px] leading-4 text-[#f00000]">切削区域</p>
        </div>
      </main>
      <Dialog />
    </div>
  );
}
